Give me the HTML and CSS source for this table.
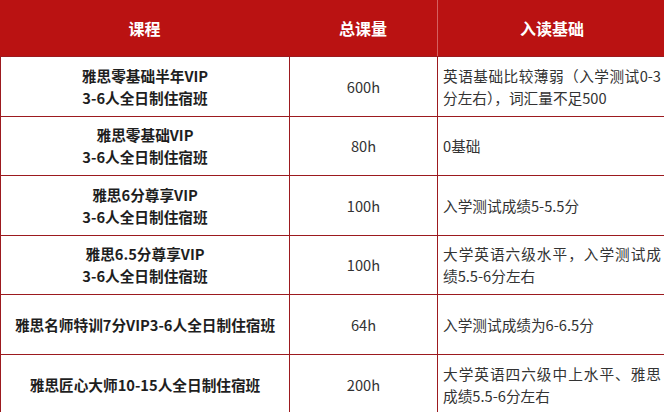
FILE: index.html
```html
<!DOCTYPE html>
<html lang="zh-CN">
<head>
<meta charset="utf-8">
<title>课程表</title>
<link rel="stylesheet" href="styles.css">
</head>
<body>
<div class="sheet">
  <div class="head">
    <div class="hcell">课程</div>
    <div class="hcell">总课量</div>
    <div class="hcell hlast">入读基础</div>
  </div>
  <div class="grid">
    <div class="cell name">雅思零基础半年VIP<br>3-6人全日制住宿班</div>
    <div class="cell hours">600h</div>
    <div class="cell base">英语基础比较薄弱（入学测试0-3分左右），词汇量不足500</div>

    <div class="cell name">雅思零基础VIP<br>3-6人全日制住宿班</div>
    <div class="cell hours">80h</div>
    <div class="cell base">0基础</div>

    <div class="cell name">雅思6分尊享VIP<br>3-6人全日制住宿班</div>
    <div class="cell hours">100h</div>
    <div class="cell base">入学测试成绩5-5.5分</div>

    <div class="cell name">雅思6.5分尊享VIP<br>3-6人全日制住宿班</div>
    <div class="cell hours">100h</div>
    <div class="cell base">大学英语六级水平，入学测试成绩5.5-6分左右</div>

    <div class="cell name">雅思名师特训7分VIP3-6人全日制住宿班</div>
    <div class="cell hours">64h</div>
    <div class="cell base">入学测试成绩为6-6.5分</div>

    <div class="cell name">雅思匠心大师10-15人全日制住宿班</div>
    <div class="cell hours">200h</div>
    <div class="cell base">大学英语四六级中上水平、雅思成绩5.5-6分左右</div>
  </div>
</div>
</body>
</html>
```
FILE: styles.css
```css
html, body {
  margin: 0;
  padding: 0;
  background: #ffffff;
  overflow: hidden;
}

.sheet {
  width: 666px;
  font-family: "Noto Sans CJK SC", "Noto Sans", sans-serif;
}

.head {
  display: grid;
  grid-template-columns: 289px 148px 229px;
  height: 56px;
  background: #ba1212;
  border-bottom: 1px solid #9c1a1f;
}

.hcell {
  display: flex;
  align-items: center;
  justify-content: center;
  color: #ffffff;
  font-size: 16px;
  font-weight: 700;
  box-sizing: border-box;
}

.hlast {
  border-left: 1px solid #d46060;
}

.grid {
  display: grid;
  grid-template-columns: 288px 147px 229px;
  grid-template-rows: 59px 58px 59px 58px 59px 60px;
  gap: 1px;
  padding-left: 1px;
  background: #9c1a1f;
}

.cell {
  background: #ffffff;
  display: flex;
  align-items: center;
  box-sizing: border-box;
  font-size: 14.67px;
  line-height: 22px;
}

.name {
  justify-content: center;
  text-align: center;
  font-weight: 700;
  color: #1e1e1e;
}

.hours {
  justify-content: center;
  color: #333333;
}

.base {
  display: block;
  padding: 0 6px 0 5px;
  color: #333333;
  text-align: justify;
  align-content: center;
}
```
